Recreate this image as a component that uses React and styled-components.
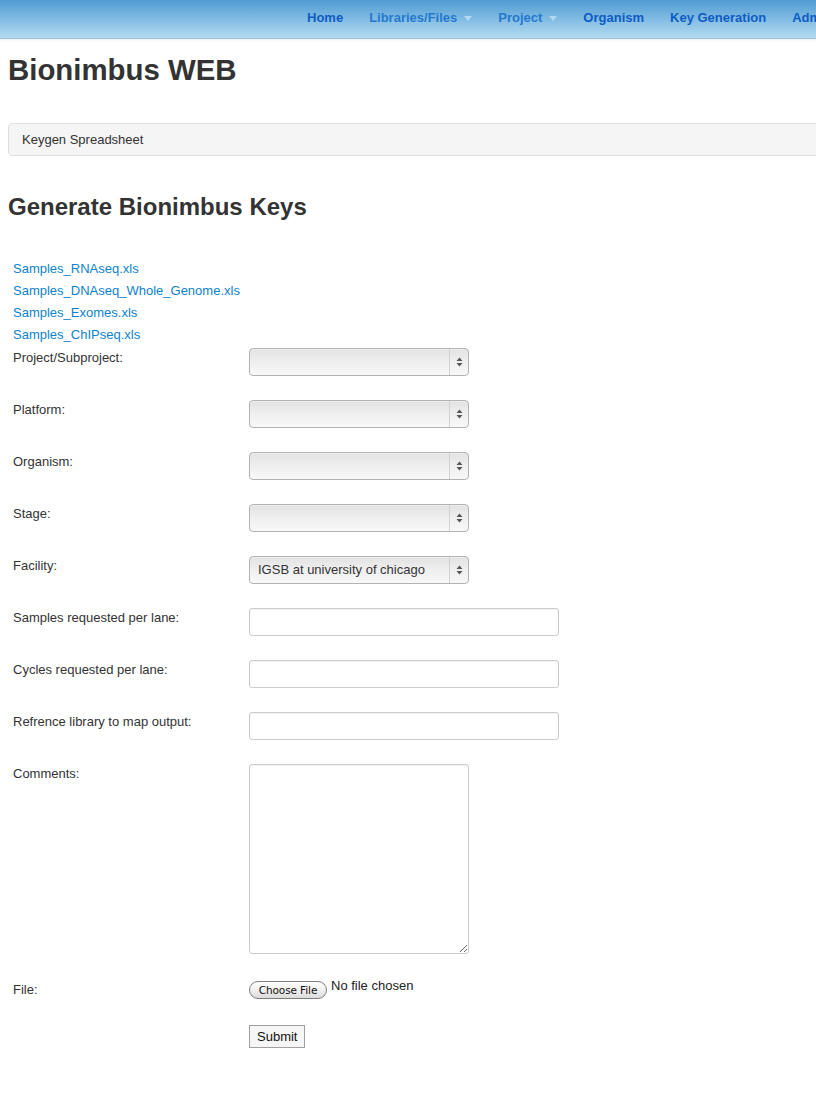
import React from "react"
import styled, { createGlobalStyle } from "styled-components"

const GlobalStyle = createGlobalStyle`
  html, body {
    margin: 0;
    padding: 0;
    overflow-x: hidden;
    background: #fff;
  }
  body {
    font-family: "Liberation Sans", Arial, Helvetica, sans-serif;
    font-size: 13px;
    color: #333;
  }
`

const navItems = [
  { label: "Home" },
  { label: "Libraries/Files", dropdown: true },
  { label: "Project", dropdown: true },
  { label: "Organism" },
  { label: "Key Generation" },
  { label: "Admin" },
]

const sheets = [
  "Samples_RNAseq.xls",
  "Samples_DNAseq_Whole_Genome.xls",
  "Samples_Exomes.xls",
  "Samples_ChIPseq.xls",
]

const selects = [
  { label: "Project/Subproject:", value: "" },
  { label: "Platform:", value: "" },
  { label: "Organism:", value: "" },
  { label: "Stage:", value: "" },
  { label: "Facility:", value: "IGSB at university of chicago" },
]

const inputs = [
  "Samples requested per lane:",
  "Cycles requested per lane:",
  "Refrence library to map output:",
]

function App() {
  return (
    <>
      <GlobalStyle />
      <NavBar>
        <NavList>
          {navItems.map((item) => (
            <NavLink key={item.label} $dropdown={item.dropdown}>
              {item.label}
              {item.dropdown && <Caret />}
            </NavLink>
          ))}
        </NavList>
      </NavBar>
      <Container>
        <Title>Bionimbus WEB</Title>
        <Breadcrumb>Keygen Spreadsheet</Breadcrumb>
        <SubTitle>Generate Bionimbus Keys</SubTitle>
        <SheetList>
          {sheets.map((s) => (
            <SheetLink key={s} href="#">{s}</SheetLink>
          ))}
        </SheetList>
        <Form>
          {selects.map((s) => (
            <React.Fragment key={s.label}>
              <Label>{s.label}</Label>
              <FakeSelect>
                <SelectValue>{s.value}</SelectValue>
                <SelectArrows>
                  <svg width="7" height="10" viewBox="0 0 7 10">
                    <path d="M3.5 0.5 L6.5 4 L0.5 4 Z" fill="#555" />
                    <path d="M3.5 9.5 L6.5 6 L0.5 6 Z" fill="#555" />
                  </svg>
                </SelectArrows>
              </FakeSelect>
            </React.Fragment>
          ))}
          {inputs.map((l) => (
            <React.Fragment key={l}>
              <Label>{l}</Label>
              <TextInput type="text" />
            </React.Fragment>
          ))}
          <Label>Comments:</Label>
          <Comments />
          <Label $top={2}>File:</Label>
          <FileRow $top={2}>
            <ChooseButton>Choose File</ChooseButton>
            <NoFile>No file chosen</NoFile>
          </FileRow>
          <span />
          <SubmitButton>Submit</SubmitButton>
        </Form>
      </Container>
    </>
  )
}

export default App

const NavBar = styled.div`
  height: 38px;
  background: linear-gradient(180deg, #4f9cd4 0%, #b3dbf1 100%);
  border-bottom: 1px solid #a3c4d6;
  box-shadow: 0 1px 3px rgba(0, 0, 0, 0.08);
  overflow: hidden;
`

const NavList = styled.div`
  display: flex;
  padding-left: 294px;
  white-space: nowrap;
`

const NavLink = styled.a`
  display: flex;
  align-items: center;
  padding: 8px 13px 10px;
  line-height: 20px;
  font-weight: bold;
  font-size: 13px;
  color: ${(p) => (p.$dropdown ? "#2479cf" : "#0d5cc4")};
  flex-shrink: 0;
`

const Caret = styled.span`
  display: inline-block;
  margin-left: 7px;
  margin-top: 1px;
  width: 0;
  height: 0;
  border-left: 4.5px solid transparent;
  border-right: 4.5px solid transparent;
  border-top: 5px solid #b2d8f2;
`

const Container = styled.div`
  width: 940px;
  padding: 0 8px;
`

const Title = styled.h1`
  margin: 11px 0 0;
  font-size: 29.4px;
  line-height: 40px;
  font-weight: bold;
  color: #333;
`

const Breadcrumb = styled.div`
  margin-top: 33px;
  padding: 7px 13px 6px;
  line-height: 18px;
  background: #f5f5f5;
  border: 1px solid #e0e0e0;
  border-radius: 4px;
  color: #333;
`

const SubTitle = styled.h2`
  margin: 31px 0 0;
  font-size: 24px;
  line-height: 40px;
  font-weight: bold;
  color: #333;
`

const SheetList = styled.div`
  margin-top: 31px;
  padding-left: 5px;
  display: flex;
  flex-direction: column;
`

const SheetLink = styled.a`
  line-height: 22px;
  color: #0d82cf;
  text-decoration: none;
`

const Form = styled.div`
  margin-top: 2px;
  display: grid;
  grid-template-columns: 241px 1fr;
  row-gap: 24px;
  align-items: start;
  justify-items: start;
`

const Label = styled.div`
  padding-left: 5px;
  line-height: 20px;
  margin-top: ${(p) => p.$top || 0}px;
`

const FakeSelect = styled.div`
  box-sizing: border-box;
  width: 220px;
  height: 28px;
  display: flex;
  border: 1px solid #b3b3b3;
  border-radius: 4px;
  background: linear-gradient(180deg, #e2e2e2 0%, #eeeeee 45%, #f8f8f8 100%);
  box-shadow: inset 0 1px 0 rgba(255, 255, 255, 0.4);
`

const SelectValue = styled.div`
  flex: 1;
  padding-left: 8px;
  line-height: 26px;
  color: #333;
  white-space: nowrap;
`

const SelectArrows = styled.div`
  width: 18px;
  border-left: 1px solid #d2d2d2;
  display: flex;
  align-items: center;
  justify-content: center;
`

const TextInput = styled.input`
  box-sizing: border-box;
  width: 310px;
  height: 28px;
  margin: 0;
  padding: 4px 6px;
  border: 1px solid #ccc;
  border-radius: 3px;
  background: #fff;
  box-shadow: inset 0 1px 1px rgba(0, 0, 0, 0.06);
  font: inherit;
  outline: none;
`

const Comments = styled.textarea`
  box-sizing: border-box;
  width: 220px;
  height: 190px;
  margin: 0;
  padding: 4px 6px;
  border: 1px solid #ccc;
  border-radius: 3px;
  background: #fff;
  box-shadow: inset 0 1px 1px rgba(0, 0, 0, 0.06);
  font: inherit;
  outline: none;
`

const FileRow = styled.div`
  display: flex;
  align-items: flex-start;
  margin-top: ${(p) => p.$top || 0}px;
`

const ChooseButton = styled.span`
  box-sizing: border-box;
  display: inline-flex;
  align-items: center;
  justify-content: center;
  width: 78px;
  height: 18px;
  margin-top: 1px;
  border: 1px solid #7d7d7d;
  border-radius: 9px;
  background: linear-gradient(180deg, #ffffff 0%, #f0f0f0 50%, #dcdcdc 100%);
  font-family: "DejaVu Sans", sans-serif;
  font-size: 10.5px;
  letter-spacing: -0.1px;
  color: #111;
`

const NoFile = styled.span`
  margin-left: 4px;
  margin-top: -3px;
  line-height: 18px;
  font-size: 13px;
  color: #222;
`

const SubmitButton = styled.button`
  box-sizing: border-box;
  margin: 1px 0 0;
  height: 23px;
  padding: 0 7px;
  border: 1px solid #a0a0a0;
  background: #f6f6f6;
  font-family: "Liberation Sans", Arial, sans-serif;
  font-size: 13px;
  color: #111;
  border-radius: 0;
`
